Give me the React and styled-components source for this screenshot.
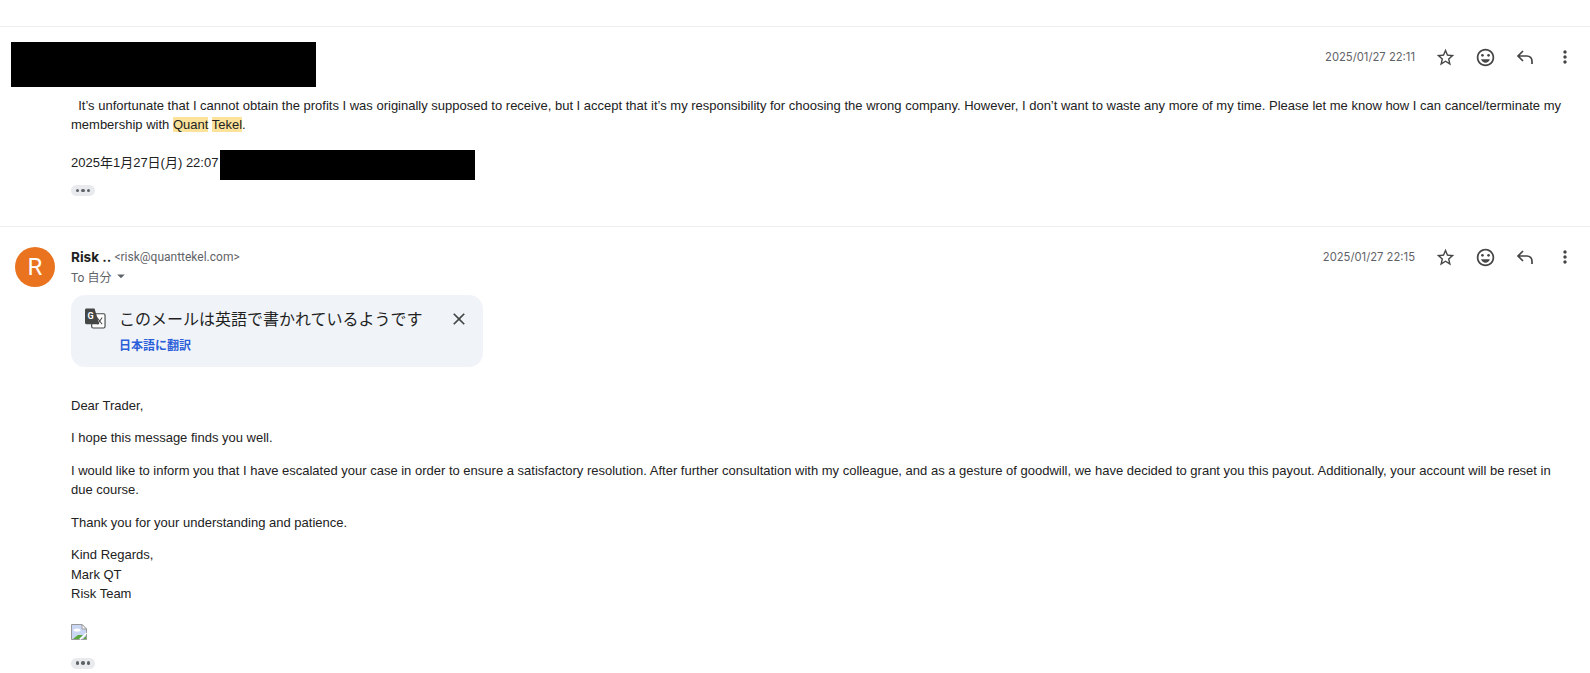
import React from 'react';
import styled, { createGlobalStyle } from 'styled-components';
import { MdStarBorder, MdMoreVert, MdClose, MdArrowDropDown, MdOutlineEmojiEmotions } from 'react-icons/md';

const GlobalStyle = createGlobalStyle`
  html, body {
    margin: 0;
    padding: 0;
    background: #fff;
    overflow: hidden;
  }
  body {
    font-family: "Liberation Sans", Arial, "Noto Sans CJK JP", sans-serif;
    color: #222;
  }
`

const Page = styled.div`
  width: 1590px;
  height: 673px;
  padding-top: 26px;
  box-sizing: border-box;
  overflow: hidden;
`

const Message = styled.section`
  border-top: 1px solid #eceeef;
  height: ${({ $height }) => $height}px;
  box-sizing: border-box;
`

const HeaderRow = styled.div`
  display: flex;
  justify-content: space-between;
  align-items: flex-start;
  padding-top: ${({ $top }) => $top || 0}px;
  padding-right: 5px;
`

const Redacted = styled.div`
  background: #000;
  flex: none;
  width: ${({ $w }) => $w}px;
  height: ${({ $h }) => $h}px;
  margin-left: ${({ $left }) => $left || 0}px;
`

const Meta = styled.div`
  display: flex;
  align-items: center;
  height: 30px;
  margin-top: ${({ $top }) => $top || 0}px;
`

const DateText = styled.span`
  font-family: Inter, Roboto, sans-serif;
  font-size: 11.25px;
  color: #5f6368;
  margin-right: 10px;
`

const IconButton = styled.span`
  width: 40px;
  height: 30px;
  display: flex;
  align-items: center;
  justify-content: center;
  color: #444746;
`

const Body = styled.div`
  margin-left: 71px;
  margin-right: 22px;
  margin-top: ${({ $top }) => $top}px;
  font-size: 13px;
  line-height: ${({ $lh }) => $lh}px;
  color: #222;
`

const Para = styled.p`
  margin: 0 0 ${({ $gap }) => $gap ?? 13}px;
`

const Mark = styled.span`
  background: #fce29a;
`

const QuoteLine = styled.div`
  display: flex;
  align-items: center;
  height: 30px;
  gap: 2px;
`

const QuoteDate = styled.span`
  padding-bottom: 6px;
`

const DotsPill = styled.div`
  width: 24px;
  height: 11px;
  border-radius: 6px;
  background: #e8eaed;
  display: flex;
  align-items: center;
  justify-content: center;
  gap: 2px;
  margin-top: ${({ $top }) => $top}px;
`

const Dot = styled.i`
  width: 3.5px;
  height: 3.5px;
  border-radius: 50%;
  background: #5f6368;
`

const SenderRow = styled.div`
  display: flex;
  padding-left: 15px;
  gap: 16px;
`

const Avatar = styled.div`
  width: 40px;
  height: 40px;
  margin-top: 20px;
  border-radius: 50%;
  background: #ea731f;
  color: #fff;
  font-family: Roboto, sans-serif;
  font-size: 24px;
  display: flex;
  align-items: center;
  justify-content: center;
`

const SenderInfo = styled.div`
  padding-top: 20px;
  font-family: Roboto, "Noto Sans CJK JP", sans-serif;
`

const NameLine = styled.div`
  height: 20px;
  display: flex;
  align-items: center;
  gap: 3px;
`

const Name = styled.b`
  font-family: Inter, Roboto, sans-serif;
  font-size: 13.6px;
  font-weight: 700;
  color: #1f1f1f;
`

const Email = styled.span`
  font-size: 12px;
  color: #5f6368;
`

const ToLine = styled.div`
  height: 18px;
  display: flex;
  align-items: center;
  font-size: 12px;
  color: #5f6368;
  gap: 1px;
`

const Banner = styled.div`
  margin: 8px 0 0 71px;
  width: 412px;
  height: 72px;
  border-radius: 14px;
  background: #f0f4f9;
  display: flex;
  box-sizing: border-box;
  padding: 13px 14px 0 14px;
`

const BannerText = styled.div`
  flex: 1;
  margin-left: 13px;
  font-family: "Noto Sans CJK JP", sans-serif;
`

const BannerTitle = styled.div`
  font-size: 16px;
  line-height: 22px;
  margin-top: -1px;
  color: #1f1f1f;
`

const BannerLink = styled.div`
  margin-top: 8px;
  font-size: 12px;
  line-height: 16px;
  font-weight: 700;
  color: #2b5fd9;
`

const CloseWrap = styled.span`
  display: flex;
  margin-top: 1px;
  color: #444746;
`

const BrokenImage = styled.div`
  height: 16px;
  margin-top: 20px;
`

const ReplyIcon = () => (
  <svg width="20" height="20" viewBox="0 0 20 20" fill="none" stroke="currentColor" strokeWidth="1.7">
    <path d="M8 4 L3 9 L8 14 M3 9 H12 a5 5 0 0 1 5 5 v3" />
  </svg>
)

const TranslateIcon = () => (
  <svg width="21" height="21" viewBox="0 0 22 22">
    <rect x="7" y="6" width="14" height="15" rx="1.5" fill="#fff" stroke="#444746" strokeWidth="1.2" />
    <path d="M1.5 0.5 H10 L15 17 H1.5 A1.5 1.5 0 0 1 0 15.5 V2 A1.5 1.5 0 0 1 1.5 0.5Z" fill="#444746" />
    <text x="2.5" y="12" fontFamily="Roboto, sans-serif" fontSize="9.5" fontWeight="700" fill="#fff">G</text>
    <path d="M12.5 10 L18 17 M18 10 L13 17" stroke="#444746" strokeWidth="1.1" fill="none" />
  </svg>
)

const BrokenImageIcon = () => (
  <svg width="16" height="16" viewBox="0 0 16 16">
    <path d="M0.5 0.5 H11 L15.5 5 V15.5 H0.5Z" fill="#c9d7f5" stroke="#9a9a9a" />
    <path d="M11 0.5 V5 H15.5Z" fill="#fff" stroke="#9a9a9a" />
    <ellipse cx="6" cy="6" rx="3.5" ry="1.6" fill="#fff" />
    <path d="M2 15 L7 11 H12 L8 15Z" fill="#5aa83c" />
    <path d="M12 15 L15 12 V15Z" fill="#5aa83c" />
    <path d="M9 15.5 L15.5 9" stroke="#fff" strokeWidth="1.4" />
  </svg>
)

const Actions = ({ date, top }) => (
  <Meta $top={top}>
    <DateText>{date}</DateText>
    <IconButton><MdStarBorder size={21} /></IconButton>
    <IconButton><MdOutlineEmojiEmotions size={21} /></IconButton>
    <IconButton><ReplyIcon /></IconButton>
    <IconButton><MdMoreVert size={20} /></IconButton>
  </Meta>
)

const Dots = ({ top }) => (
  <DotsPill $top={top}><Dot /><Dot /><Dot /></DotsPill>
)

export default function App() {
  return (
    <Page>
      <GlobalStyle />
      <Message $height={200}>
        <HeaderRow $top={15}>
          <Redacted $w={305} $h={45} $left={11} />
          <Actions date="2025/01/27 22:11" />
        </HeaderRow>
        <Body $top={9} $lh={19}>
          <Para $gap={16}>
            &nbsp; It’s unfortunate that I cannot obtain the profits I was originally supposed to receive, but I accept that it’s my responsibility for choosing the wrong company. However, I don’t want to waste any more of my time. Please let me know how I can cancel/terminate my membership with <Mark>Quant</Mark> <Mark>Tekel</Mark>.
          </Para>
          <QuoteLine>
            <QuoteDate>2025年1月27日(月) 22:07</QuoteDate>
            <Redacted $w={255} $h={30} />
          </QuoteLine>
          <Dots top={5} />
        </Body>
      </Message>
      <Message $height={450}>
        <HeaderRow>
          <SenderRow>
            <Avatar>R</Avatar>
            <SenderInfo>
              <NameLine>
                <Name>Risk ..</Name>
                <Email>&lt;risk@quanttekel.com&gt;</Email>
              </NameLine>
              <ToLine>
                To 自分
                <MdArrowDropDown size={18} />
              </ToLine>
            </SenderInfo>
          </SenderRow>
          <Actions date="2025/01/27 22:15" top={15} />
        </HeaderRow>
        <Banner>
          <TranslateIcon />
          <BannerText>
            <BannerTitle>このメールは英語で書かれているようです</BannerTitle>
            <BannerLink>日本語に翻訳</BannerLink>
          </BannerText>
          <CloseWrap><MdClose size={20} /></CloseWrap>
        </Banner>
        <Body $top={28.6} $lh={19.5}>
          <Para>Dear Trader,</Para>
          <Para>I hope this message finds you well.</Para>
          <Para>I would like to inform you that I have escalated your case in order to ensure a satisfactory resolution. After further consultation with my colleague, and as a gesture of goodwill, we have decided to grant you this payout. Additionally, your account will be reset in due course.</Para>
          <Para>Thank you for your understanding and patience.</Para>
          <Para $gap={0}>Kind Regards,<br />Mark QT<br />Risk Team</Para>
          <BrokenImage><BrokenImageIcon /></BrokenImage>
          <Dots top={18} />
        </Body>
      </Message>
    </Page>
  )
}
